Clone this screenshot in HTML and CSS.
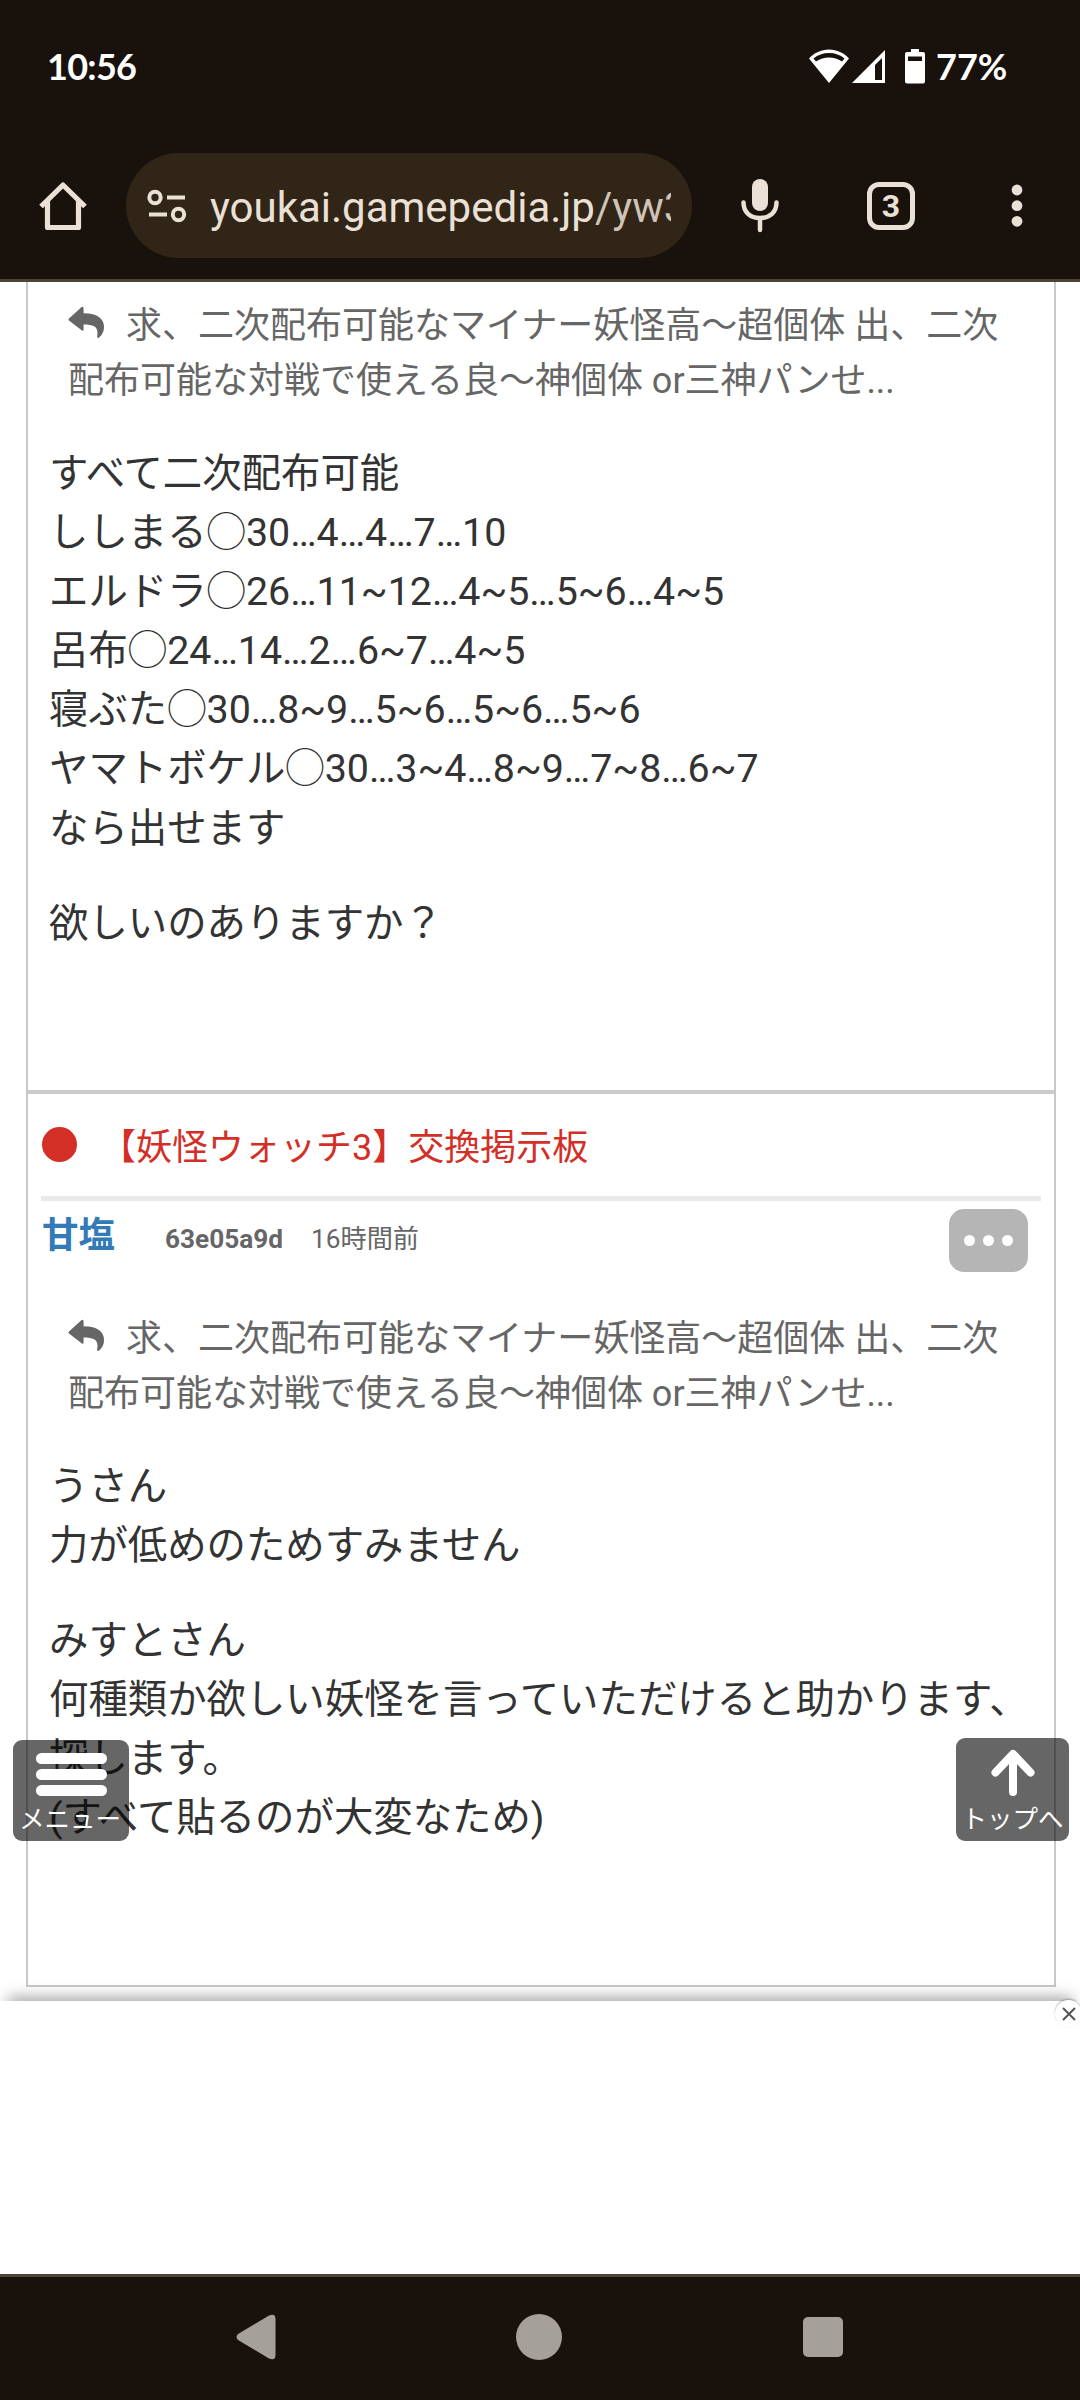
FILE: index.html
```html
<!DOCTYPE html>
<html lang="ja">
<head>
  <meta charset="UTF-8">
  <meta name="viewport" content="width=device-width, initial-scale=1.0">
  <title>【妖怪ウォッチ3】交換掲示板</title>
  <link rel="stylesheet" href="styles.css">
</head>
<body>
  <header class="browser">
    <div class="status-bar">
      <span class="clock">10:56</span>
      <svg class="wifi" width="40" height="34" viewBox="0 0 40 34">
        <path d="M20 34L0 9.5C5 4 12 0.500 20 0.500S35 4 40 9.500Z" fill="#fff"/>
        <path d="M4.500 9.500Q11 4 20 4T35.500 9.500L33 12.500Q27 8.500 20 8.500T7 12.500Z" fill="#19110b"/>
      </svg>
      <svg class="signal" width="34" height="34" viewBox="0 0 34 34">
        <path d="M0 34L33 1V34Z" fill="#fff"/>
        <path d="M23 16L30 9V31H23Z" fill="#19110b"/>
      </svg>
      <svg class="battery" width="20" height="35" viewBox="0 0 20 35">
        <path d="M6 0H14V3H18Q20 3 20 5V32.500Q20 34.500 18 34.500H2Q0 34.500 0 32.500V5Q0 3 2 3H6Z" fill="#fff"/>
        <path d="M3 7.500H17V12H3Z" fill="#19110b"/>
      </svg>
      <span class="percent">77%</span>
    </div>
    <div class="toolbar">
      <svg class="home" width="48" height="48" viewBox="0 0 48 48" fill="none" stroke="#ebe0d6" stroke-width="5.200" stroke-linejoin="round">
        <path d="M2 24.500L24 3L46 24.500M8.500 19V45.500H39.500V19"/>
      </svg>
      <div class="url-bar">
        <svg width="40" height="34" viewBox="0 0 40 34" fill="none" stroke="#ebe0d6" stroke-width="4">
          <circle cx="8" cy="8.500" r="5.700"/>
          <circle cx="31.500" cy="25.500" r="5.700"/>
          <path d="M20 8.500H38M2 25.500H20"/>
        </svg>
        <div class="url">youkai.gamepedia.jp<span>/yw3</span></div>
      </div>
      <svg class="mic" width="38" height="54" viewBox="0 0 38 54">
        <rect x="11" y="0" width="16" height="32" rx="8" fill="#ebe0d6"/>
        <path d="M2.500 23.500C2.500 33 9 39 19 39S35.500 33 35.500 23.500M19 39V51" fill="none" stroke="#ebe0d6" stroke-width="4.500" stroke-linecap="round"/>
      </svg>
      <div class="tabs">3</div>
      <svg class="more" width="12" height="44" viewBox="0 0 12 44" fill="#ebe0d6">
        <circle cx="6" cy="6" r="5.400"/>
        <circle cx="6" cy="21.700" r="5.400"/>
        <circle cx="6" cy="37.300" r="5.400"/>
      </svg>
    </div>
  </header>

  <main>
    <div class="board">
      <article class="post first">
        <div class="quote">
          <svg class="reply" width="37" height="33" viewBox="0 0 38 33">
            <path d="M1 12.500L14 0.500Q16 -0.500 16 2V7C31 7 37 13 37 21Q37 27 32.500 31.500Q29.500 34 30 30C31.500 21 27 18.500 16 18.500V23.500Q16 26 14 24.500L1 14.500Q0 13.500 1 12.500Z" fill="#666"/>
          </svg>求、二次配布可能なマイナー妖怪高～超個体 出、二次<br>配布可能な対戦で使える良～神個体 or三神パンせ...
        </div>
        <div class="text">
          <p>すべて二次配布可能<br>
          ししまる◯30…4…4…7…10<br>
          エルドラ◯26…11~12…4~5…5~6…4~5<br>
          呂布◯24…14…2…6~7…4~5<br>
          寝ぶた◯30…8~9…5~6…5~6…5~6<br>
          ヤマトボケル◯30…3~4…8~9…7~8…6~7<br>
          なら出せます</p>
          <p>欲しいのありますか？</p>
        </div>
      </article>

      <article class="post">
        <h2><span class="dot"></span>【妖怪ウォッチ3】交換掲示板</h2>
        <div class="meta">
          <a class="name">甘塩</a>
          <b class="uid">63e05a9d</b>
          <span class="time">16時間前</span>
          <button class="options"><i></i><i></i><i></i></button>
        </div>
        <div class="quote">
          <svg class="reply" width="37" height="33" viewBox="0 0 38 33">
            <path d="M1 12.500L14 0.500Q16 -0.500 16 2V7C31 7 37 13 37 21Q37 27 32.500 31.500Q29.500 34 30 30C31.500 21 27 18.500 16 18.500V23.500Q16 26 14 24.500L1 14.500Q0 13.500 1 12.500Z" fill="#666"/>
          </svg>求、二次配布可能なマイナー妖怪高～超個体 出、二次<br>配布可能な対戦で使える良～神個体 or三神パンせ...
        </div>
        <div class="text">
          <p>うさん<br>
          力が低めのためすみません</p>
          <p>みすとさん<br>
          何種類か欲しい妖怪を言っていただけると助かります、<br>
          探します。<br>
          (すべて貼るのが大変なため)</p>
        </div>
      </article>
    </div>

    <!-- floating buttons -->
    <div class="float-btn menu">
      <div class="bars"><i></i><i></i><i></i></div>
      <span>メニュー</span>
    </div>
    <div class="float-btn top">
      <svg width="44" height="47" viewBox="0 0 44 47" fill="none" stroke="#fff" stroke-width="8" stroke-linecap="round" stroke-linejoin="round">
        <path d="M4.500 23.500L22 5L39.500 23.500M22 8V43"/>
      </svg>
      <span>トップへ</span>
    </div>
  </main>

  <div class="ad">
    <div class="ad-frame"></div>
    <div class="ad-close">
      <svg width="14" height="14" viewBox="0 0 14 14" stroke="#555" stroke-width="2"><path d="M1 1L13 13M13 1L1 13"/></svg>
    </div>
  </div>

  <nav class="nav-bar">
    <svg class="back" width="40" height="46" viewBox="0 0 40 46"><path d="M2 20L33 1.500Q39.500 -1 39.500 5V41Q39.500 47 33 44.500L2 26Q-1 23 2 20Z" fill="#a6a09b"/></svg>
    <span class="circle"></span>
    <span class="square"></span>
  </nav>
</body>
</html>
```
FILE: styles.css
```css
* {
  box-sizing: border-box;
}
body {
  margin: 0;
  width: 1080px;
  height: 2400px;
  display: flex;
  flex-direction: column;
  overflow: hidden;
  background-color: #fff;
  color: #333;
  font-family: Roboto, "Noto Sans CJK JP", sans-serif;
}

/* browser chrome */
.browser {
  height: 282px;
  background-color: #19110b;
  border-bottom: 3px solid #4f4433;
}
.status-bar {
  display: flex;
  align-items: center;
  height: 132px;
  padding: 0 75px 0 47px;
  color: #fff;
  font-family: Lato, sans-serif;
  font-size: 36px;
  font-weight: bold;
}
.clock {
  flex: 1;
  letter-spacing: -0.7px;
}
.signal {
  margin: 0 19px 0 3px;
}
.percent {
  width: 69px;
  margin-left: 11px;
}
.toolbar {
  display: flex;
  align-items: center;
  height: 105px;
  margin-top: 21px;
  padding-left: 39px;
}
.url-bar {
  display: flex;
  align-items: center;
  width: 566px;
  height: 105px;
  margin-left: 39px;
  padding: 0 21px 0 21px;
  border-radius: 53px;
  background-color: #302517;
}
.url {
  flex: 1;
  margin-left: 23px;
  overflow: hidden;
  white-space: nowrap;
  color: #ebe0d6;
  font-size: 42px;
  line-height: 60px;
  padding-top: 5px;
}
.url span {
  color: #cfc4b5;
}
.mic {
  margin-left: 49px;
}
.tabs {
  width: 48px;
  height: 48px;
  margin-left: 88px;
  border: 5px solid #ebe0d6;
  border-radius: 12px;
  color: #ebe0d6;
  font-size: 32px;
  font-weight: bold;
  line-height: 38px;
  text-align: center;
}
.more {
  margin-left: 96px;
}

/* board */
main {
  position: relative;
  height: 1719px;
}
.board {
  height: 1705px;
  margin: 0 24px 0 26px;
  border: 2px solid #c8c8c8;
  border-top: none;
}
.post.first {
  height: 812px;
  padding-top: 17px;
  border-bottom: 4px solid #ccc;
}
.quote {
  padding-left: 40px;
  color: #666;
  font-size: 36px;
  line-height: 54.5px;
  white-space: nowrap;
}
.reply {
  margin-right: 21px;
  vertical-align: -1px;
}
.text {
  padding: 36px 0 0 21px;
  font-size: 39.4px;
  line-height: 59.1px;
  white-space: nowrap;
}
.text p {
  margin: 0 0 36px;
}
h2 {
  display: flex;
  align-items: center;
  height: 107px;
  margin: 0 13px;
  padding-bottom: 2px;
  border-bottom: 5px solid #e9e9e9;
  color: #d32f27;
  font-size: 36px;
  font-weight: normal;
}
.dot {
  width: 35px;
  height: 35px;
  margin: 0 23px 0 1px;
  border-radius: 50%;
  background-color: #d32f27;
}
.meta {
  display: flex;
  align-items: baseline;
  height: 111px;
  padding: 8px 26px 0 14px;
  color: #666;
  font-size: 26.2px;
}
.name {
  margin-top: -3px;
  color: #337ab7;
  font-size: 36.5px;
  font-weight: bold;
}
.uid {
  margin-left: 50px;
}
.time {
  margin-left: 28px;
}
.options {
  display: flex;
  align-self: flex-start;
  align-items: center;
  justify-content: center;
  gap: 8px;
  width: 79px;
  height: 63px;
  margin-left: auto;
  border: none;
  border-radius: 15px;
  background-color: #b5b5b5;
}
.options i {
  width: 11px;
  height: 11px;
  border-radius: 50%;
  background-color: #fff;
}

/* floating buttons */
.float-btn {
  position: absolute;
  bottom: 160px;
  display: flex;
  flex-direction: column;
  align-items: center;
  border-radius: 9px;
  background-color: rgba(0, 0, 0, 0.6);
  color: #fff;
  font-size: 25.5px;
  line-height: 30px;
  white-space: nowrap;
}
.menu {
  left: 13px;
  width: 116px;
  height: 101px;
  padding-top: 13px;
}
.top {
  right: 11px;
  width: 113px;
  height: 103px;
  padding-top: 11px;
}
.bars i {
  display: block;
  width: 71px;
  height: 11px;
  margin-bottom: 5px;
  border-radius: 6px;
  background-color: #fff;
}
.menu span {
  margin: 3px 2px 0 0;
}
.top span {
  margin-top: 8px;
}

/* ad */
.ad {
  position: relative;
  height: 273px;
}
.ad-frame {
  height: 273px;
  margin: 0 8px;
  background-color: #fff;
  box-shadow: 0 -4px 14px rgba(0, 0, 0, 0.35);
  clip-path: inset(-20px -8px 273px -8px);
}
.ad-close {
  position: absolute;
  top: -1px;
  right: -2px;
  width: 27px;
  height: 27px;
  padding-top: 7px;
  border-radius: 50%;
  background-color: #fff;
  box-shadow: 0 -1px 2px rgba(0, 0, 0, 0.3);
  line-height: 0;
  text-align: center;
}

.nav-bar {
  display: flex;
  align-items: center;
  height: 126px;
  padding: 0 0 3px 236px;
  border-top: 3px solid #4f4433;
  background-color: #19110b;
}
.circle {
  width: 46px;
  height: 46px;
  margin-left: 240px;
  border-radius: 50%;
  background-color: #a6a09b;
}
.square {
  width: 40px;
  height: 40px;
  margin-left: 241px;
  border-radius: 5px;
  background-color: #a6a09b;
}
```
